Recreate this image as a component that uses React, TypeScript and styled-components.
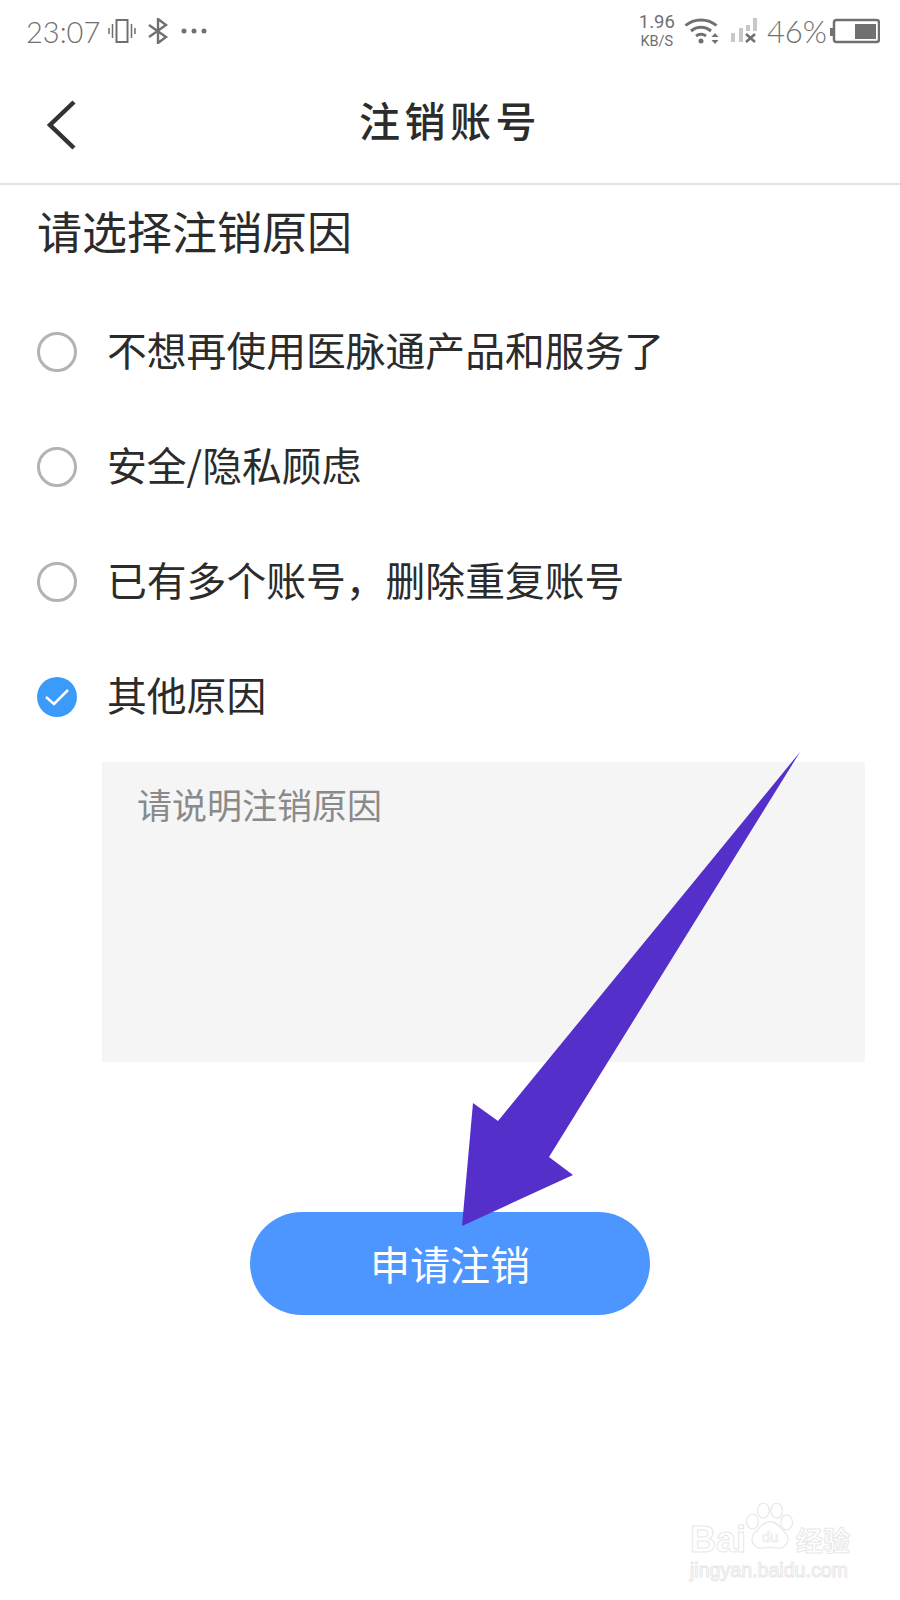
import React, { useState } from 'react';
import styled, { createGlobalStyle } from 'styled-components';

const GlobalStyle = createGlobalStyle`
  html, body { margin: 0; padding: 0; background: #fff; }
  body { font-family: "Noto Sans CJK SC", "Liberation Sans", sans-serif; }
`;

const Page = styled.div`
  position: relative;
  width: 900px;
  height: 1600px;
  overflow: hidden;
  background: #fff;
`;

const StatusBar = styled.div`
  height: 62px;
  padding: 0 20px 0 26px;
  box-sizing: border-box;
  display: flex;
  align-items: center;
  justify-content: space-between;
  color: #6f6f6f;
`;

const StatusGroup = styled.div`
  display: flex;
  align-items: center;
`;

const Clock = styled.span`
  font-family: Lato, "Liberation Sans", sans-serif;
  font-weight: 300;
  font-size: 29px;
  margin-right: 8px;
`;

const Speed = styled.div`
  display: flex;
  flex-direction: column;
  align-items: center;
  font-family: Roboto, "Liberation Sans", sans-serif;
  font-size: 18.5px;
  line-height: 21px;
  margin-right: 9px;
  & > span + span { font-size: 14.5px; line-height: 18px; }
`;

const Battery = styled.span`
  font-family: Lato, "Liberation Sans", sans-serif;
  font-weight: 300;
  font-size: 31px;
  margin: 0 3px 0 9px;
`;

const Header = styled.header`
  height: 123px;
  box-sizing: border-box;
  border-bottom: 2px solid #e2e2e2;
  position: relative;
  display: flex;
  align-items: center;
  justify-content: center;
`;

const BackButton = styled.button`
  position: absolute;
  left: 47px;
  top: 37px;
  padding: 0;
  border: 0;
  background: none;
  display: flex;
`;

const Title = styled.h1`
  margin: -8px 0 0;
  font-size: 41px;
  font-weight: 500;
  letter-spacing: 4.5px;
  color: #2c2c2c;
  font-family: "Noto Sans CJK SC", sans-serif;
`;

const Heading = styled.h2`
  margin: 15px 0 0 37px;
  font-size: 45px;
  line-height: 62px;
  font-weight: 400;
  color: #2b2b2b;
`;

const ReasonList = styled.div`
  margin-top: 61px;
  padding-left: 37px;
  display: flex;
  flex-direction: column;
  gap: 57px;
`;

const ReasonRow = styled.label`
  height: 58px;
  display: flex;
  align-items: center;
  gap: 30px;
  font-size: 39.8px;
  color: #2b2b2b;
  cursor: pointer;
`;

const ReasonText = styled.span`
  margin-bottom: 8px;
`;

const Radio = styled.span<{ $checked: boolean }>`
  width: 40px;
  height: 40px;
  box-sizing: border-box;
  flex: none;
  border-radius: 50%;
  display: flex;
  align-items: center;
  justify-content: center;
  border: ${p => (p.$checked ? '0' : '3px solid #b3b3b3')};
  background: ${p => (p.$checked ? '#3b9bfb' : '#fff')};
`;

const NoteBox = styled.div`
  margin: 36px 35px 0 102px;
  height: 300px;
  box-sizing: border-box;
  padding: 17px 35px;
  background: #f5f5f5;
  color: #8a8a8a;
  font-size: 35px;
  line-height: 50px;
`;

const SubmitRow = styled.div`
  margin-top: 150px;
  display: flex;
  justify-content: center;
`;

const SubmitButton = styled.button`
  width: 400px;
  height: 103px;
  border: 0;
  border-radius: 52px;
  padding: 0 0 2px;
  background: #4d96ff;
  color: #fff;
  font-family: inherit;
  font-size: 40px;
`;

const ArrowOverlay = styled.svg`
  position: absolute;
  left: 0;
  top: 0;
  pointer-events: none;
`;

const Watermark = styled.div`
  position: absolute;
  left: 690px;
  top: 1519px;
  width: 170px;
  color: #fff;
  -webkit-text-stroke: 1px #e8e8e8;
  font-family: "Liberation Sans", sans-serif;
`;

const MarkTop = styled.div`
  display: flex;
  align-items: center;
  font-size: 36px;
  font-weight: 700;
  line-height: 42px;
  height: 42px;
  white-space: nowrap;
  & > em {
    font-style: normal;
    font-size: 27px;
    font-family: "Noto Sans CJK SC", sans-serif;
    margin-left: 50px;
  }
`;

const MarkBottom = styled.div`
  font-size: 19.6px;
  line-height: 22px;
  margin-top: -2px;
  white-space: nowrap;
`;

const PawIcon = styled.svg`
  position: absolute;
  left: 55px;
  top: -16px;
`;

const PawLabel = styled.text`
  font-family: "Liberation Sans", sans-serif;
  font-size: 18px;
  stroke-width: 0.8px;
`;

const REASONS = ['不想再使用医脉通产品和服务了', '安全/隐私顾虑', '已有多个账号，删除重复账号', '其他原因'];

export default function App() {
  const [selected, setSelected] = useState(3);

  return (
    <Page>
      <GlobalStyle />
      <StatusBar>
        <StatusGroup>
          <Clock>23:07</Clock>
          <svg width="28" height="26" viewBox="0 0 28 26" fill="none" stroke="#707070">
            <rect x="8.5" y="2" width="11" height="22" strokeWidth="2" />
            <path d="M4.500 6v14M1 10v6M23.500 6v14M27 10v6" strokeWidth="1.500" />
          </svg>
          <svg width="22" height="26" viewBox="0 0 22 26" fill="none" stroke="#707070" strokeWidth="2.400" style={{ marginLeft: 11 }}>
            <path d="M2 7l17 12-8 6V1l8 6L2 19" />
          </svg>
          <svg width="26" height="6" viewBox="0 0 26 6" fill="#707070" style={{ marginLeft: 12 }}>
            <circle cx="3" cy="3" r="2.500" />
            <circle cx="13" cy="3" r="2.500" />
            <circle cx="23" cy="3" r="2.500" />
          </svg>
        </StatusGroup>
        <StatusGroup>
          <Speed>
            <span>1.96</span>
            <span>KB/S</span>
          </Speed>
          <svg width="36" height="28" viewBox="0 0 36 28" fill="none" stroke="#707070" strokeWidth="3">
            <path d="M1.500 8.500C10 1 24 1 32.500 8.500" />
            <path d="M7 14c6-5 14-5 20 0" />
            <path d="M12 19c3-2 7-2 10 0" />
            <circle cx="17" cy="24" r="2.500" fill="#707070" stroke="none" />
            <path d="M31 16l3.500 4h-7zM31 27l3.500-4h-7z" fill="#707070" stroke="none" />
          </svg>
          <svg width="28" height="26" viewBox="0 0 28 26" style={{ marginLeft: 10 }}>
            <rect x="1" y="15" width="4" height="9" fill="#c8c8c8" />
            <rect x="9" y="10" width="4" height="14" fill="#c8c8c8" />
            <rect x="16" y="7" width="4" height="6" fill="#c8c8c8" />
            <rect x="23" y="0" width="4" height="13" fill="#c8c8c8" />
            <path d="M16 16l9 8M25 16l-9 8" stroke="#707070" strokeWidth="2.500" />
          </svg>
          <Battery>46%</Battery>
          <svg width="50" height="26" viewBox="0 0 50 26" fill="none">
            <rect x="0" y="10" width="3" height="8" fill="#707070" />
            <rect x="4" y="2" width="45" height="22" rx="2.500" stroke="#707070" strokeWidth="2.500" />
            <rect x="25" y="6" width="21" height="15" fill="#707070" />
          </svg>
        </StatusGroup>
      </StatusBar>

      <Header>
        <BackButton aria-label="返回">
          <svg width="30" height="52" viewBox="0 0 30 52" fill="none" stroke="#333" strokeWidth="4.500">
            <path d="M27 3L3 26l24 23" />
          </svg>
        </BackButton>
        <Title>注销账号</Title>
      </Header>

      <Heading>请选择注销原因</Heading>

      <ReasonList>
        {REASONS.map((reason, index) => (
          <ReasonRow key={reason} onClick={() => setSelected(index)}>
            <Radio $checked={selected === index}>
              {selected === index && (
                <svg width="26" height="20" viewBox="0 0 26 20" fill="none" stroke="#fff" strokeWidth="2.500">
                  <path d="M2 10l8 7L24 3" />
                </svg>
              )}
            </Radio>
            <ReasonText>{reason}</ReasonText>
          </ReasonRow>
        ))}
      </ReasonList>

      <NoteBox>请说明注销原因</NoteBox>

      <SubmitRow>
        <SubmitButton>申请注销</SubmitButton>
      </SubmitRow>

      <ArrowOverlay width="900" height="1600" viewBox="0 0 900 1600">
        <polygon points="800,752 549,1157 573,1175 462,1226 473,1103 498,1121" fill="#552fc9" />
      </ArrowOverlay>

      <Watermark>
        <MarkTop>
          Bai<em>经验</em>
        </MarkTop>
        <MarkBottom>jingyan.baidu.com</MarkBottom>
        <PawIcon width="50" height="52" viewBox="0 0 60 62" fill="#fff" stroke="#e8e8e8" strokeWidth="1.500">
          <ellipse cx="9" cy="22" rx="7" ry="9" />
          <ellipse cx="22" cy="9" rx="7" ry="9" />
          <ellipse cx="38" cy="9" rx="7" ry="9" />
          <ellipse cx="50" cy="23" rx="7" ry="9" />
          <path d="M30 22c9 0 12 8 18 13 7 7 3 19-8 19-4 0-7-1-10-1s-6 1-10 1C9 54 5 42 12 35c6-5 9-13 18-13z" />
          <PawLabel x="30" y="47" textAnchor="middle">du</PawLabel>
        </PawIcon>
      </Watermark>
    </Page>
  );
}
